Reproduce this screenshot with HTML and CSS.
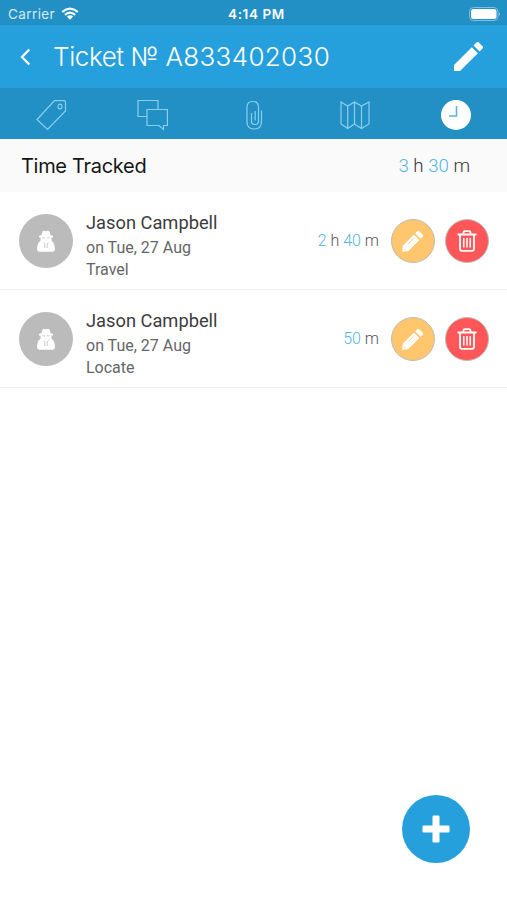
FILE: index.html
```html
<!DOCTYPE html>
<html lang="en">
<head>
    <meta charset="UTF-8">
    <meta name="viewport" content="width=device-width, initial-scale=1.0">
    <title>Ticket</title>
    <link rel="stylesheet" href="styles.css">
</head>
<body>

    <svg width="0" height="0" class="symbols">
        <symbol id="agent" viewBox="0 0 18 22">
            <path fill="#fff" d="M4.500 5 5.500 1.500Q6.500 0 9 1.200 11.500 0 12.500 1.500L13.500 5 16 6V7.500H14.500V11L16.500 12.500Q18 16 18 19 17.800 21.800 15.500 21.800H2.500Q.2 21.800 0 19 0 16 1.500 12.500L3.500 11V7.500H2V6Z"/>
            <path stroke="#bbb" stroke-width=".8" fill="none" d="M5.500 7.800H8M10 7.800H12.500M6.500 12.500 7.800 14V18M11.500 12.500 10.200 14V18"/>
        </symbol>
        <symbol id="pencil" viewBox="0 0 24 24">
            <path fill="#fff" d="M2.200 22.600Q1 23 1.200 21.500L2 16.300 13.500 4.800 19.200 10.500 7.700 22ZM14.800 3.500 17 1.200Q18 .3 19 1.200L22.800 5Q23.600 6 22.800 7L20.500 9.200Z"/>
            <path stroke="#ffc66d" stroke-width=".9" fill="none" d="M7.500 14.500 13.500 8.500M3.300 19.500 4.800 21"/>
        </symbol>
        <symbol id="trash" viewBox="0 0 20 22">
            <g fill="none" stroke="#fff" stroke-width="1.800">
                <path d="M.5 4.500H19.500M6.500 4V2.600Q6.500 1.200 8 1.200H12Q13.500 1.200 13.500 2.600V4M3 4.500V18.800Q3 20.800 5 20.800H15Q17 20.800 17 18.800V4.500"/>
                <path stroke-width="1.500" d="M6.800 8V17.500M10 8V17.500M13.200 8V17.500"/>
            </g>
        </symbol>
    </svg>

    <div class="status-bar">
        <div class="carrier">
            <span>Carrier</span>
            <svg width="18" height="13" viewBox="0 0 18 13">
                <g fill="none" stroke="#fff" stroke-width="2.200">
                    <path d="M1.200 5Q9-1.800 16.800 5M3.900 7.800Q9 3.400 14.100 7.800"/>
                </g>
                <path fill="#fff" d="M5.900 9.600Q9 7 12.100 9.600L9 12.800Z"/>
            </svg>
        </div>
        <span class="clock">4:14 PM</span>
        <svg class="battery" width="32" height="14" viewBox="0 0 32 14">
            <rect x=".5" y=".5" width="28.500" height="13" rx="4" fill="none" stroke="#7fc0e0"/>
            <rect x="2" y="2" width="25.500" height="10" rx="2.500" fill="#fff"/>
            <path fill="#8cc6e4" d="M30 5Q32 7 30 9Z"/>
        </svg>
    </div>

    <div class="header">
        <svg class="back" width="11" height="18" viewBox="0 0 11 18">
            <path d="M9.300 1.500 2 9 9.300 16.500" fill="none" stroke="#fff" stroke-width="2.300"/>
        </svg>
        <h1>Ticket № <span class="number">A833402030</span></h1>
        <svg class="edit" width="29" height="29" viewBox="3 3 18 18">
            <path fill="#fff" d="M3 17.250V21h3.750L17.810 9.940l-3.750-3.750L3 17.250zM20.710 7.040c.39-.39.39-1.020 0-1.410l-2.340-2.340c-.39-.39-1.020-.39-1.410 0l-1.830 1.830 3.750 3.750 1.830-1.830z"/>
        </svg>
    </div>

    <div class="tabs">
        <div class="tab">
            <svg width="32" height="32" viewBox="0 0 32 32">
                <path d="M2 20.500 19.500 1.700H29Q30.500 1.700 30.500 3.200V12L12.500 30.500Z"/>
                <ellipse cx="25" cy="7.500" rx="2" ry="2.300"/>
            </svg>
        </div>
        <div class="tab">
            <svg width="32" height="32" viewBox="0 0 32 32">
                <path d="M11 17.500H2V1.500H22V10.500M11 10.500H31.400V26.500H27.500V30.500L23 26.500H11Z"/>
            </svg>
        </div>
        <div class="tab">
            <svg width="32" height="32" viewBox="0 0 32 32">
                <path d="M20.500 8V22.500Q20.500 25.500 17 25.500 13.500 25.500 13.500 22.500V14M20.500 8Q20.500 2.500 14.800 2.500 9 2.500 9 8V22.500Q9 30 16.200 30 23.500 30 23.500 22.500V11.500M17.200 12V21.500"/>
            </svg>
        </div>
        <div class="tab">
            <svg width="32" height="32" viewBox="0 0 32 32">
                <path d="M2 3 8.700 7 15.500 3 22.500 7 30 3V25L22.500 29.500 15.500 25 8.700 29.500 2 25ZM8.700 7V29.500M15.500 3V25M22.500 7V29.500"/>
            </svg>
        </div>
        <div class="tab active">
            <svg width="32" height="32" viewBox="0 0 32 32">
                <circle cx="16" cy="16" r="15"/>
                <path d="M16.500 7V17H9"/>
            </svg>
        </div>
    </div>

    <div class="summary">
        <h2>Time Tracked</h2>
        <div class="total"><b>3</b> h <b>30</b> m</div>
    </div>

    <div class="entry">
        <div class="avatar"><svg width="18" height="22"><use href="#agent"/></svg></div>
        <div class="info">
            <h3>Jason Campbell</h3>
            <p>on Tue, 27 Aug</p>
            <p>Travel</p>
        </div>
        <div class="time"><b>2</b> h <b>40</b> m</div>
        <button class="button button-edit"><svg width="23" height="23"><use href="#pencil"/></svg></button>
        <button class="button button-delete"><svg width="20" height="22"><use href="#trash"/></svg></button>
    </div>

    <div class="entry">
        <div class="avatar"><svg width="18" height="22"><use href="#agent"/></svg></div>
        <div class="info">
            <h3>Jason Campbell</h3>
            <p>on Tue, 27 Aug</p>
            <p>Locate</p>
        </div>
        <div class="time"><b>50</b> m</div>
        <button class="button button-edit"><svg width="23" height="23"><use href="#pencil"/></svg></button>
        <button class="button button-delete"><svg width="20" height="22"><use href="#trash"/></svg></button>
    </div>

    <button class="add-button">
        <svg width="28" height="28" viewBox="0 0 28 28">
            <rect x="10.500" y=".5" width="7" height="27" rx="1.200" fill="#fff"/>
            <rect x=".5" y="10.500" width="27" height="7" rx="1.200" fill="#fff"/>
        </svg>
    </button>

</body>
</html>
```
FILE: styles.css
```css
* {
    box-sizing: border-box;
}
body {
    display: flex;
    flex-direction: column;
    height: 900px;
    margin: 0;
    background-color: #fff;
    font-family: Roboto, sans-serif;
    overflow: hidden;
}
h1, h2, h3, p {
    margin: 0;
    font-weight: 400;
}
b {
    font-weight: inherit;
    color: #54b4e3;
}
svg {
    display: block;
    flex: none;
}
.symbols {
    position: absolute;
}
.status-bar {
    display: grid;
    grid-template-columns: 1fr auto 1fr;
    align-items: center;
    height: 25px;
    padding: 2px 6px 0 8px;
    background-color: #2290c4;
    color: #fff;
    font-family: Inter, sans-serif;
    font-size: 13.5px;
}
.carrier {
    display: flex;
    align-items: center;
    gap: 6px;
    color: #d5ebf6;
    letter-spacing: 0.4px;
}
.clock {
    padding-left: 4px;
    font-weight: 600;
    font-size: 13.5px;
    letter-spacing: 0.6px;
}
.battery {
    justify-self: end;
}
.header {
    display: flex;
    align-items: center;
    height: 63px;
    padding: 0 24px 0 20px;
    background-color: #26a0dc;
    color: #fff;
}
.header h1 {
    flex: 1;
    margin-left: 22px;
    font-family: Inter, sans-serif;
    font-size: 26px;
    font-weight: 300;
    letter-spacing: -0.4px;
    white-space: nowrap;
}
.header .number {
    letter-spacing: 0.35px;
}
.tabs {
    display: flex;
    height: 51px;
    background-color: #2290c4;
}
.tab {
    display: flex;
    flex: 1;
    align-items: center;
    justify-content: center;
    padding-top: 2px;
}
.tab svg {
    fill: none;
    stroke: #8bcff0;
    stroke-width: 1.2;
}
.tab.active circle {
    fill: #fff;
    stroke: none;
}
.tab.active path {
    stroke: #5eb2dc;
    stroke-width: 1.6;
}
.summary {
    display: flex;
    align-items: center;
    justify-content: space-between;
    height: 53px;
    padding: 0 37px 0 21px;
    background-color: #fafafa;
}
.summary h2 {
    font-family: Inter, sans-serif;
    font-size: 20px;
    letter-spacing: -0.3px;
    color: #151515;
}
.total {
    font-size: 18.7px;
    font-weight: 300;
    color: #333;
}
.entry {
    display: flex;
    align-items: center;
    height: 98px;
    padding: 0 18px 0 19px;
    border-bottom: 1px solid #f1f1f1;
}
.avatar {
    display: flex;
    align-items: center;
    justify-content: center;
    width: 54px;
    height: 54px;
    border-radius: 50%;
    background-color: #bbb;
}
.info {
    flex: 1;
    margin-left: 13px;
    padding-top: 9px;
}
.info h3 {
    margin-bottom: 2px;
    font-size: 18.3px;
    line-height: 25px;
    color: #3c3c3c;
}
.info p {
    font-size: 16px;
    line-height: 22px;
    color: #666;
}
.time {
    margin-right: 12px;
    font-size: 16px;
    font-weight: 300;
    color: #555;
}
.button {
    display: flex;
    align-items: center;
    justify-content: center;
    width: 44px;
    height: 44px;
    padding: 0;
    border: 1px solid #bdbdb5;
    border-radius: 50%;
    cursor: pointer;
}
.button-edit {
    padding: 1px 1px 0 0;
    background-color: #ffc66d;
}
.button-delete {
    margin-left: 10px;
    background-color: #ff5659;
}
.add-button {
    display: flex;
    align-items: center;
    justify-content: center;
    width: 68px;
    height: 68px;
    margin: auto 37px 37px auto;
    padding: 0;
    border: none;
    border-radius: 50%;
    background-color: #26a0dc;
    cursor: pointer;
}
```
